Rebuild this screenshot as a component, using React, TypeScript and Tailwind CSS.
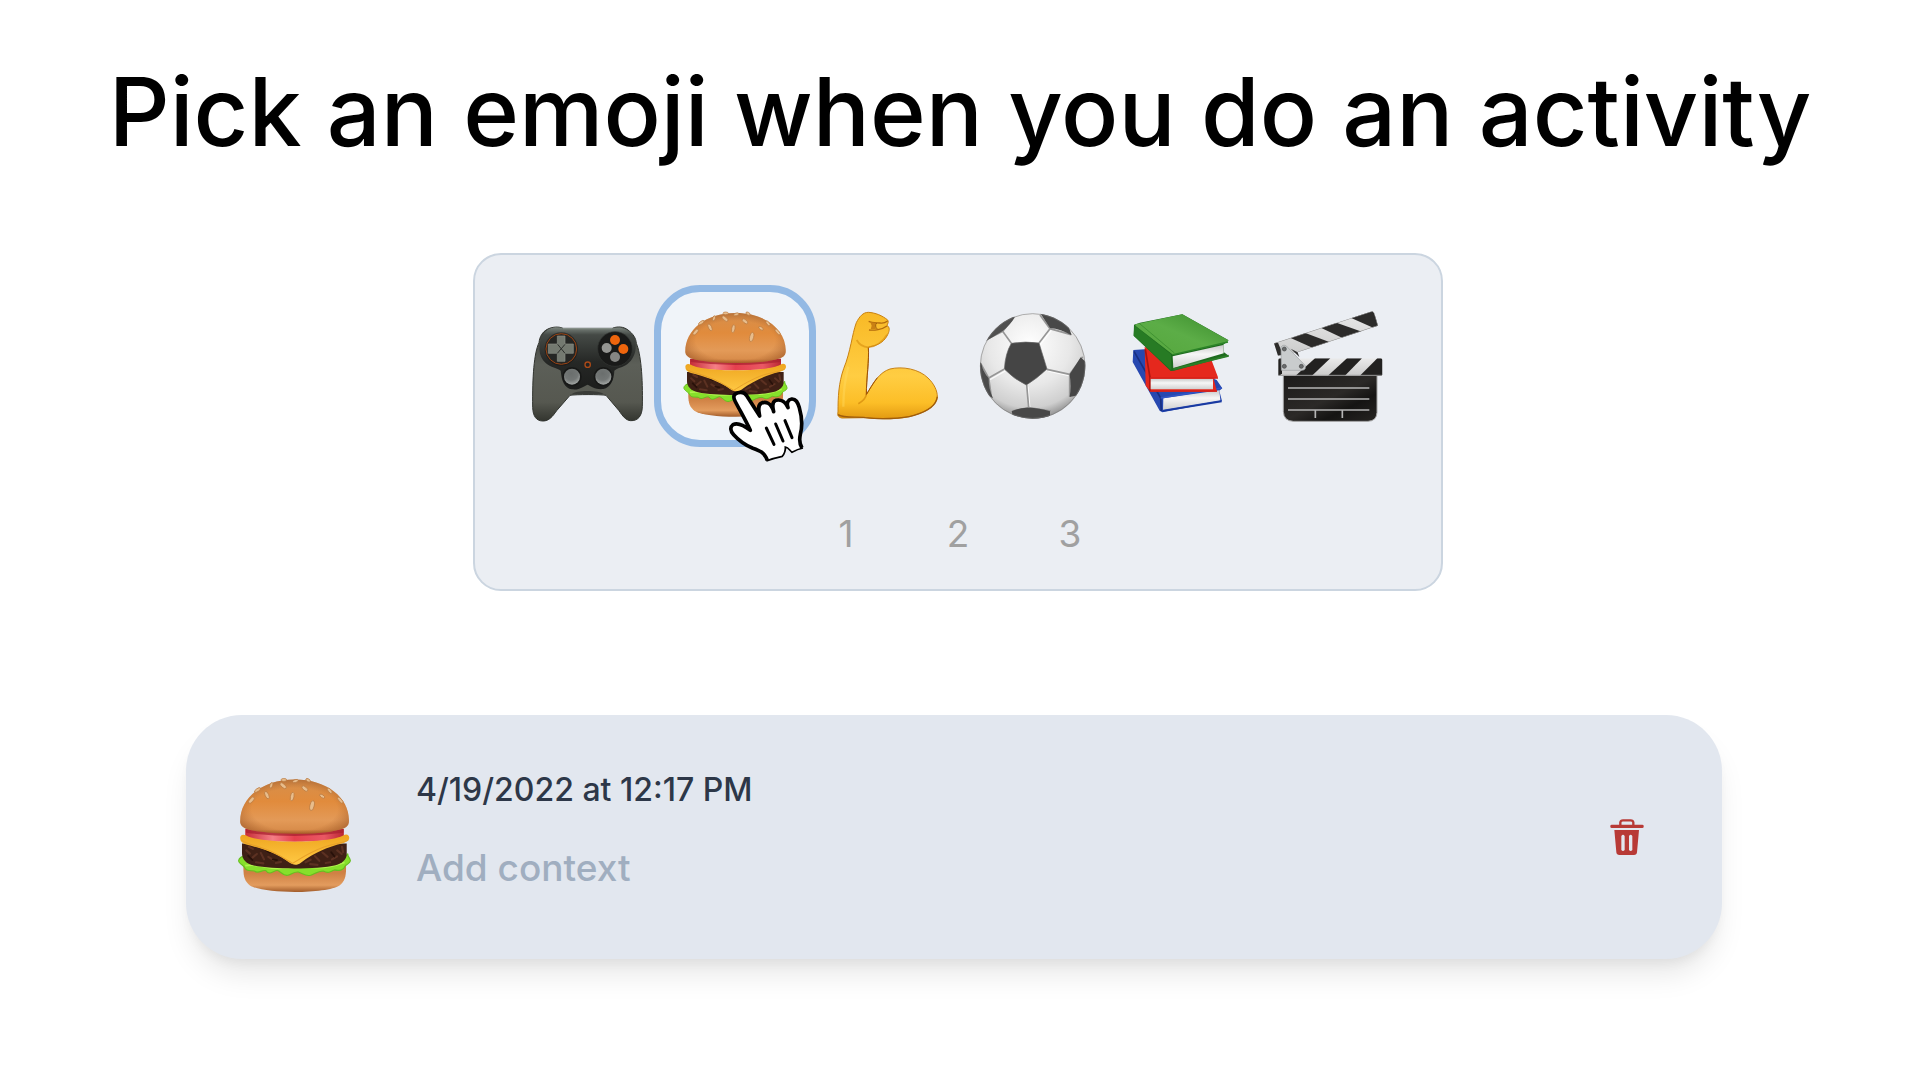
import React, { useId, useState } from "react";

type IconProps = { className?: string };

function Controller({ className }: IconProps) {
  return (
    <svg className={className} viewBox="46 48 360 360" aria-hidden="true">
      <defs>
        <linearGradient id="padGrip" x1="0" y1="0" x2="0" y2="1">
          <stop offset="0" stopColor="#3a3d39" />
          <stop offset="0.4" stopColor="#5c5f58" />
          <stop offset="0.8" stopColor="#565850" />
          <stop offset="1" stopColor="#33352f" />
        </linearGradient>
        <linearGradient id="padTop" x1="0" y1="0" x2="0" y2="1">
          <stop offset="0" stopColor="#7c857e" />
          <stop offset="0.12" stopColor="#454a46" />
          <stop offset="0.55" stopColor="#262826" />
          <stop offset="1" stopColor="#1c1d1c" />
        </linearGradient>
        <radialGradient id="padStick" cx="0.45" cy="0.3" r="0.7">
          <stop offset="0" stopColor="#6a6e6d" />
          <stop offset="0.6" stopColor="#737776" />
          <stop offset="1" stopColor="#a2a6a4" />
        </radialGradient>
      </defs>
      <path d="M110 118 C125 110 145 109 157 115 L305 115 C320 108 340 110 352 120 C368 132 376 145 377 160 C390 190 397 260 395 350 C394 378 382 393 360 392 C345 391 336 378 325 362 L286 316 C270 313 195 313 178 316 L138 362 C125 380 115 393 97 393 C76 393 67 378 66 352 C65 260 70 190 85 158 C87 140 95 126 110 118Z" fill="url(#padGrip)" stroke="#31342f" strokeWidth="3" />
      <path d="M100 130 C112 113 138 108 157 115 L305 115 C325 108 350 115 364 132 C384 160 378 205 345 226 C330 234 318 235 311 242 C310 270 300 292 278 297 C256 300 240 288 231 284 C220 288 207 301 184 298 C160 294 153 272 150 242 C140 234 120 233 105 219 C82 200 80 160 100 130Z" fill="url(#padTop)" />
      <path d="M183 313 C195 300 265 300 280 313Z" fill="#3a3c38" />
      <path d="M157 116 H305" stroke="#8d968f" strokeWidth="3" />
      <circle cx="152" cy="177" r="50" fill="#151615" opacity=".55" />
      <circle cx="152" cy="177" r="46" fill="#252624" stroke="#9a4313" strokeWidth="3" />
      <path d="M140 138 H163 V162 H188 V190 H163 V214 H140 V190 H113 V162 H140Z" fill="#747970" stroke="#8b9087" strokeWidth="2" strokeLinejoin="round" />
      <path d="M141 163 L163 190 M163 163 L140 190" stroke="#2d2f2c" strokeWidth="3" />
      <circle cx="313" cy="177" r="52" fill="#191a19" stroke="#333633" strokeWidth="2" />
      <circle cx="313" cy="150" r="15" fill="#ee650d" />
      <circle cx="338" cy="177" r="15" fill="#ee650d" />
      <circle cx="288" cy="174" r="15" fill="#949592" />
      <circle cx="313" cy="201" r="15" fill="#858683" />
      <circle cx="231" cy="224" r="8" fill="#222" stroke="#ac4a17" strokeWidth="4" />
      <circle cx="184" cy="260" r="29" fill="#171817" />
      <circle cx="278" cy="260" r="29" fill="#171817" />
      <circle cx="184" cy="260" r="24" fill="url(#padStick)" />
      <circle cx="278" cy="260" r="24" fill="url(#padStick)" />
    </svg>
  );
}

function Burger({ className }: IconProps) {
  const id = useId().replace(/[^a-zA-Z0-9]/g, "");
  return (
    <svg className={className} viewBox="105 108 360 360" aria-hidden="true">
      <defs>
        <linearGradient id={`${id}bun`} x1="0" y1="0" x2="0" y2="1">
          <stop offset="0" stopColor="#d68f4c" />
          <stop offset="0.4" stopColor="#e18b3c" />
          <stop offset="0.75" stopColor="#e39a58" />
          <stop offset="0.92" stopColor="#d98d4b" />
          <stop offset="1" stopColor="#a85c28" />
        </linearGradient>
        <radialGradient id={`${id}edge`} cx="0.5" cy="0.55" r="0.56">
          <stop offset="0.7" stopColor="#a9622c" stopOpacity="0" />
          <stop offset="1" stopColor="#a05a28" stopOpacity="0.6" />
        </radialGradient>
        <linearGradient id={`${id}base`} x1="0" y1="0" x2="0" y2="1">
          <stop offset="0.3" stopColor="#cf8144" />
          <stop offset="0.75" stopColor="#e39c5e" />
          <stop offset="1" stopColor="#a35d2b" />
        </linearGradient>
        <linearGradient id={`${id}tomato`} x1="0" y1="0" x2="1" y2="0">
          <stop offset="0" stopColor="#c62c38" />
          <stop offset="0.28" stopColor="#f57f86" />
          <stop offset="0.5" stopColor="#e5404e" />
          <stop offset="0.8" stopColor="#ea5864" />
          <stop offset="1" stopColor="#b92633" />
        </linearGradient>
        <linearGradient id={`${id}cheese`} x1="0" y1="0" x2="0" y2="1">
          <stop offset="0" stopColor="#eea51f" />
          <stop offset="1" stopColor="#ffc944" />
        </linearGradient>
      </defs>
      <path d="M145 365 C144 398 148 410 163 422 C200 446 375 446 411 422 C427 410 430 395 429 365Z" fill={`url(#${id}base)`} />
      <path d="M138 344 C130 350 130 356 136 361 C140 366 146 367 149 374 C154 384 165 380 175 382 C187 392 195 378 207 381 C218 396 226 382 239 380 C250 385 256 397 268 394 C280 391 286 383 297 385 C311 390 318 398 331 394 C345 388 353 382 366 382 C380 390 388 384 397 379 C410 382 422 380 426 369 C431 362 442 361 441 353 C440 345 433 342 434 334 L430 340 L146 340Z" fill="#86e02b" stroke="#66bf20" strokeWidth="3" />
      <path d="M150 367 Q178 364 206 371 T270 373 T340 372 T425 358" fill="none" stroke="#b0f34d" strokeWidth="5" />
      <path d="M141 306 H431 V335 C431 351 418 361 400 366 C350 378 228 378 174 367 C152 361 141 350 141 332Z" fill="#3f2015" />
      <path d="M153 325 l10 9 M170 345 l12 -10 M193 332 l9 18 M214 343 l14 9 M180 358 l20 3 M235 360 l14 -3 M160 315 l11 6 M317 358 l14 -7 M343 341 l12 13 M364 331 l14 12 M390 350 l14 -8 M405 325 l12 10 M373 360 l12 -2 M418 315 l3 15 M330 363 l20 2" stroke="#5c3122" strokeWidth="6" strokeLinecap="round" fill="none" />
      <path d="M158 340 l12 12 M208 325 l10 6 M226 350 l12 2 M346 324 l14 -5 M388 330 l9 12" stroke="#28110a" strokeWidth="5" strokeLinecap="round" fill="none" />
      <path d="M150 266 H423 V289 C390 305 184 306 150 289Z" fill={`url(#${id}tomato)`} />
      <path d="M152 276 Q287 294 422 276 L422 266 H152Z" fill="#a82230" opacity=".75" />
      <path d="M136 290 C137 281 144 280 153 284 C190 306 380 307 421 284 C431 278 438 283 438 290 C438 298 430 302 418 306 C380 315 342 331 304 359 C292 368 282 365 271 358 C238 333 193 319 153 309 C142 305 136 300 136 290Z" fill={`url(#${id}cheese)`} />
      <path d="M139 296 C150 308 177 310 201 320 C233 330 257 347 281 361 C303 347 338 326 370 315 C400 306 424 304 435 296" fill="none" stroke="#e7a029" strokeWidth="3" />
      <path d="M136 247 C134 183 194 129 287 129 C380 129 441 183 437 247 C435 267 407 268 382 274 C325 281 245 281 190 273 C165 269 138 266 136 247Z" fill={`url(#${id}bun)`} />
      <path d="M136 247 C134 183 194 129 287 129 C380 129 441 183 437 247 C435 267 407 268 382 274 C325 281 245 281 190 273 C165 269 138 266 136 247Z" fill={`url(#${id}edge)`} />
      <g fill="#e8bd8c" stroke="#b9793f" strokeWidth="2">
        <ellipse cx="167" cy="186" rx="5" ry="11" transform="rotate(42 167 186)" />
        <ellipse cx="210" cy="172" rx="5" ry="11" transform="rotate(-25 210 172)" />
        <ellipse cx="255" cy="146" rx="5" ry="11" transform="rotate(-48 255 146)" />
        <ellipse cx="280" cy="176" rx="5" ry="12" transform="rotate(10 280 176)" />
        <ellipse cx="315" cy="154" rx="5" ry="10" transform="rotate(-50 315 154)" />
        <ellipse cx="335" cy="201" rx="6" ry="14" transform="rotate(12 335 201)" />
        <ellipse cx="363" cy="175" rx="4" ry="8" transform="rotate(-55 363 175)" />
        <ellipse cx="222" cy="145" rx="4" ry="8" transform="rotate(20 222 145)" />
        <ellipse cx="257" cy="130" rx="8" ry="4" />
        <ellipse cx="289" cy="133" rx="8" ry="4" transform="rotate(-15 289 133)" />
        <ellipse cx="324" cy="131" rx="7" ry="4" transform="rotate(30 324 131)" />
        <ellipse cx="384" cy="160" rx="4" ry="9" transform="rotate(-40 384 160)" />
        <ellipse cx="413" cy="186" rx="4" ry="11" transform="rotate(-42 413 186)" />
        <ellipse cx="184" cy="158" rx="4" ry="10" transform="rotate(55 184 158)" />
      </g>
    </svg>
  );
}

function Biceps({ className }: IconProps) {
  return (
    <svg className={className} viewBox="40 48 360 360" aria-hidden="true">
      <defs>
        <linearGradient id="armSkin" x1="0" y1="0" x2="0" y2="1">
          <stop offset="0" stopColor="#f8b926" />
          <stop offset="0.6" stopColor="#ffcd42" />
          <stop offset="0.85" stopColor="#fcbe27" />
          <stop offset="1" stopColor="#e39a12" />
        </linearGradient>
      </defs>
      <path d="M137 98 C146 80 157 67 173 67 C194 68 215 77 231 90 C235 96 231 101 229 106 C238 113 236 120 234 127 C226 148 214 158 197 165 C187 170 181 168 173 172 C176 210 167 265 167 314 C190 275 207 247 238 237 C275 228 325 237 352 264 C370 281 380 302 380 320 C377 349 345 366 310 376 C273 389 206 388 164 383 L94 384 C82 382 80 375 82 366 C82 320 84 279 99 236 C120 185 124 133 137 98Z" fill="url(#armSkin)" stroke="#c98110" strokeWidth="3" />
      <path d="M173 172 C176 210 167 265 167 314 C177 298 187 280 200 263" fill="none" stroke="#9c5208" strokeWidth="3" />
      <path d="M82 374 C100 386 140 379 164 383 C206 388 273 387 310 376 C345 366 377 349 380 320" fill="none" stroke="#9f5c0b" strokeWidth="4" />
      <path d="M167 314 C165 325 158 333 143 341" fill="none" stroke="#d8900f" strokeWidth="5" opacity=".8" />
      <path d="M174 94 C184 99 196 98 208 99 C217 101 224 98 231 93" fill="none" stroke="#b26b0d" strokeWidth="4" />
      <path d="M175 120 C190 122 214 119 229 108" fill="none" stroke="#b26b0d" strokeWidth="4" />
      <path d="M179 97 L198 99 L193 106 L196 117 L180 118 L183 107Z" fill="#c98014" />
      <path d="M198 99 C193 104 194 113 200 117" fill="none" stroke="#9c5a0c" strokeWidth="3" />
      <path d="M138 150 C146 165 159 171 173 172 C196 170 216 155 229 134" fill="none" stroke="#d78e0e" strokeWidth="5" opacity=".6" />
      <path d="M113 230 C101 275 98 310 98 350" fill="none" stroke="#ffdc63" strokeWidth="7" opacity=".4" />
    </svg>
  );
}

function SoccerBall({ className }: IconProps) {
  return (
    <svg className={className} viewBox="37 48 360 360" aria-hidden="true">
      <defs>
        <radialGradient id="ballLight" cx="0.47" cy="0.3" r="0.7">
          <stop offset="0" stopColor="#fff" />
          <stop offset="0.55" stopColor="#e8e8e8" />
          <stop offset="0.85" stopColor="#cfcfcf" />
          <stop offset="1" stopColor="#929292" />
        </radialGradient>
        <clipPath id="ballClip">
          <circle cx="216" cy="228" r="158" />
        </clipPath>
      </defs>
      <circle cx="216" cy="228" r="158" fill="url(#ballLight)" />
      <g clipPath="url(#ballClip)">
        <g fill="none" stroke="#fff" strokeWidth="4" opacity=".8" transform="translate(4 5)">
          <path d="M126 124 L152 160 M235 159 L268 116 M130 238 L84 264 M198 285 L204 353 M259 238 L327 253" />
        </g>
        <g fill="none" stroke="#969696" strokeWidth="5">
          <path d="M126 124 L152 160 M235 159 L268 116 M130 238 L84 264 M198 285 L204 353 M259 238 L327 253" />
          <path d="M82 146 L126 124 L160 82 M238 75 L268 116 L331 134 M60 220 L84 264 L92 319 M366 200 L327 253 V320 M204 353 L155 363 M204 353 L270 363" />
        </g>
        <path d="M152 160 Q195 153 235 159 L259 237 Q227 267 197 285 Q159 267 131 237 Q134 190 152 160Z" fill="#454545" stroke="#666" strokeWidth="2" />
        <path d="M68 158 L126 123 Q150 103 163 80 L110 80Z" fill="#505050" />
        <path d="M235 64 L268 114 Q300 117 333 136 L310 70Z" fill="#484848" />
        <path d="M50 205 L62 221 Q67 244 84 265 Q84 297 97 325 L50 300Z" fill="#4a4a4a" />
        <path d="M360 202 Q345 226 327 253 Q332 290 327 321 L380 310 V220Z" fill="#464646" />
        <path d="M153 364 Q177 352 204 353 Q235 353 268 364 L268 395 H160Z" fill="#484848" />
      </g>
      <circle cx="216" cy="228" r="157" fill="none" stroke="#777" strokeWidth="3" opacity=".55" />
    </svg>
  );
}

function Books({ className }: IconProps) {
  return (
    <svg className={className} viewBox="34 48 360 360" aria-hidden="true">
      <defs>
        <linearGradient id="bookGreen" x1="0" y1="1" x2="1" y2="0">
          <stop offset="0" stopColor="#55a63c" />
          <stop offset="0.5" stopColor="#5cad47" />
          <stop offset="1" stopColor="#388a2b" />
        </linearGradient>
        <linearGradient id="bookPages" x1="0" y1="0" x2="0" y2="1">
          <stop offset="0" stopColor="#c9c9c9" />
          <stop offset="0.4" stopColor="#f6f6f6" />
          <stop offset="1" stopColor="#d0d0d0" />
        </linearGradient>
      </defs>
      <path d="M68 180 L102 178 L318 270 L335 295 L326 302 L334 333 L155 367 L147 362 L66 216Z" fill="#2748b0" />
      <path d="M70 184 L150 324 L152 363" fill="none" stroke="#182f82" strokeWidth="5" />
      <path d="M158 325 L326 301 L329 331 L157 359Z" fill="url(#bookPages)" />
      <path d="M156 363 L333 334" stroke="#1839a0" strokeWidth="5" />
      <path d="M150 324 L333 294" stroke="#3155c5" strokeWidth="5" />
      <path d="M102 171 L118 175 L302 209 L322 262 L309 267 L319 305 L119 305 L105 287Z" fill="#e5281d" />
      <path d="M104 178 L118 263 V304" fill="none" stroke="#a8140f" strokeWidth="5" />
      <path d="M120 266 H307 V298 H120Z" fill="url(#bookPages)" />
      <path d="M118 264 H322 M119 303 H319" stroke="#d5211a" strokeWidth="5" />
      <path d="M70 104 L88 98 L215 73 L354 151 L338 164 L339 186 L355 198 L190 242 L180 243 L69 137Z" fill="#1e6b1e" />
      <path d="M75 103 L215 73 L353 151 L348 158 L187 194 L74 107Z" fill="url(#bookGreen)" />
      <path d="M71 106 L181 193 L182 241 L69 137Z" fill="#277b24" />
      <path d="M87 101 L191 189" stroke="#2f8427" strokeWidth="3" opacity=".6" />
      <path d="M186 199 L338 165 L339 190 L188 234Z" fill="url(#bookPages)" />
      <path d="M187 194 L352 156" stroke="#2c8428" strokeWidth="4" />
      <path d="M188 238 L354 197" stroke="#2b7d27" strokeWidth="6" />
    </svg>
  );
}

function Clapper({ className }: IconProps) {
  return (
    <svg className={className} viewBox="61 48 360 360" aria-hidden="true">
      <defs>
        <linearGradient id="clapBody" x1="0" y1="0" x2="1" y2="1">
          <stop offset="0" stopColor="#1c1b1a" />
          <stop offset="0.5" stopColor="#2b2927" />
          <stop offset="0.7" stopColor="#151413" />
          <stop offset="1" stopColor="#262422" />
        </linearGradient>
        <linearGradient id="clapWhite" x1="0" y1="0" x2="0" y2="1">
          <stop offset="0" stopColor="#eaeaea" />
          <stop offset="1" stopColor="#c9c9c9" />
        </linearGradient>
        <clipPath id="clapUpper">
          <path d="M70 160 L360 65 Q368 62 371 69 L382 107 L141 187 L82 197Z" />
        </clipPath>
        <clipPath id="clapLower">
          <rect x="83" y="205" width="312" height="53" rx="5" />
        </clipPath>
      </defs>
      <path d="M98 255 H379 V367 Q378 393 352 394 H128 Q99 393 98 364Z" fill="url(#clapBody)" stroke="#a3a3a3" strokeWidth="3" />
      <path d="M112 294 H356 M112 327 H356 M112 360 H356 M194 361 V384 M275 361 V384" stroke="#b5b5b5" strokeWidth="5" />
      <g clipPath="url(#clapUpper)">
        <rect x="65" y="60" width="325" height="145" fill="url(#clapWhite)" />
        <g fill="#2c2b2a">
          <path d="M66 157 L82 158 L100 200 H70Z" />
          <path d="M120 144 L162 128 L242 158 L192 176Z" />
          <path d="M212 114 L251 96 L338 127 L282 147Z" />
          <path d="M300 83 L365 60 L390 110 L371 115Z" />
        </g>
        <path d="M70 160 L360 65 Q368 62 371 69 L382 107 L141 187" fill="none" stroke="#8f8f8f" strokeWidth="3" />
      </g>
      <g clipPath="url(#clapLower)">
        <rect x="83" y="205" width="312" height="53" fill="url(#clapWhite)" />
        <g fill="#222120">
          <path d="M193 205 H239 L183 258 H134Z" />
          <path d="M289 205 H334 L282 258 H231Z" />
          <path d="M380 205 H396 V258 H327Z" />
          <path d="M82 205 H94 V250 L86 258 H82Z" />
        </g>
      </g>
      <path d="M83 256 H394" stroke="#9a9a9a" strokeWidth="3" />
      <path d="M120 176 L141 187 L146 201Z" fill="#333" />
      <path d="M91 172 Q96 162 107 168 L163 226 Q168 240 155 241 H92Z" fill="#c9cccd" stroke="#9b9fa0" strokeWidth="2" />
      <g fill="#6a6c6d" stroke="#444" strokeWidth="2">
        <circle cx="101" cy="177" r="6" />
        <circle cx="101" cy="229" r="6" />
        <circle cx="152" cy="229" r="6" />
      </g>
    </svg>
  );
}

function HandPointer({ className }: IconProps) {
  return (
    <svg className={className} viewBox="265 360 234 219" aria-hidden="true">
      <path d="M383 571 C374 546 358 541 338 534 C315 524 298 512 282 494 C271 482 271 471 280 464 C296 456 314 467 332 481 C318 451 301 422 286 393 C279 379 283 371 295 368 C308 365 317 369 323 380 L360 438 C357 421 353 407 364 400 C378 393 394 398 402 425 C397 405 398 394 409 391 C424 387 438 396 445 413 C440 398 445 389 456 387 C469 386 474 397 479 413 C487 441 489 467 482 493 C478 511 480 523 487 534 C474 537 466 542 457 546 C450 541 446 533 437 532 C438 544 435 550 428 558 C413 560 397 565 383 571Z" fill="#fff" />
      <path d="M383 571 C374 546 358 541 338 534 C315 524 298 512 282 494 C271 482 271 471 280 464 C296 456 314 467 332 481 C318 451 301 422 286 393 C279 379 283 371 295 368 C308 365 317 369 323 380 L360 438 C357 421 353 407 364 400 C378 393 394 398 402 425 C397 405 398 394 409 391 C424 387 438 396 445 413 C440 398 445 389 456 387 C469 386 474 397 479 413 C487 441 489 467 482 493 C478 511 480 523 487 534" fill="none" stroke="#000" strokeWidth="11" strokeLinejoin="round" />
      <path d="M380 573 C398 566 413 562 428 559 C435 550 438 544 437 531 C446 532 450 541 457 547 C466 542 476 537 490 534" fill="none" stroke="#000" strokeWidth="5" />
      <path d="M380 474 L403 523 M408 462 L430 513 M436 452 L457 503" stroke="#000" strokeWidth="9" strokeLinecap="round" />
    </svg>
  );
}

function TrashIcon({ className }: IconProps) {
  return (
    <svg className={className} viewBox="148 117 102 108" aria-hidden="true">
      <path d="M179 137 V127 Q180 121 187 121 H210 Q217 121 218 127 V137" fill="none" stroke="#b83a36" strokeWidth="7" />
      <rect x="149" y="134" width="100" height="10" rx="4" fill="#b83a36" />
      <path fillRule="evenodd" d="M161 150 H235 L229 217 Q228 225 220 225 H176 Q168 225 167 217Z M182 168 V210 Q187 216 192 210 V168 Q187 161 182 168Z M205 168 V210 Q210 216 215 210 V168 Q210 161 205 168Z" fill="#b83a36" />
    </svg>
  );
}

const activities = [
  { name: "Gaming", Icon: Controller },
  { name: "Eating", Icon: Burger },
  { name: "Exercise", Icon: Biceps },
  { name: "Soccer", Icon: SoccerBall },
  { name: "Reading", Icon: Books },
  { name: "Movies", Icon: Clapper },
];

export default function App() {
  const [selected, setSelected] = useState(1);
  const [context, setContext] = useState("");

  return (
    <main className="min-h-screen bg-white pt-[52px] pb-16 font-['Inter',sans-serif]">
      <h1 className="text-center text-[95px] leading-[120px] font-medium whitespace-nowrap text-black">
        Pick an emoji when you do an activity
      </h1>

      <div className="mt-[81px] pr-1">
        <section
          aria-label="Activities"
          className="mx-auto w-full max-w-[970px] rounded-[28px] border-2 border-[#cbd5e0] bg-[#ebeef3] px-9 pt-[30px] pb-[31px]"
        >
          <div className="grid grid-cols-6 justify-items-center">
            {activities.map(({ name, Icon }, i) => (
              <div key={name} className="relative flex justify-center">
                <button
                  type="button"
                  aria-label={name}
                  aria-pressed={selected === i}
                  onClick={() => setSelected(i)}
                  className={
                    selected === i
                      ? "-mx-2 flex size-[162px] shrink-0 items-center justify-center rounded-[46px] border-[7px] border-[#93b9e4] bg-[#f0f4f9]"
                      : "-mx-2 flex size-[162px] shrink-0 items-center justify-center rounded-[46px]"
                  }
                >
                  <Icon className="size-[120px] shrink-0" />
                </button>
                {selected === i && (
                  <HandPointer className="pointer-events-none absolute top-[105px] left-[66px] h-[73px] w-[78px]" />
                )}
              </div>
            ))}
          </div>
          <nav aria-label="Pages" className="mt-[63px] flex justify-center gap-12 text-[37px] leading-[48px] text-[#a0a0a0]">
            <button type="button" className="w-16">1</button>
            <button type="button" className="w-16">2</button>
            <button type="button" className="w-16">3</button>
          </nav>
        </section>
      </div>

      <div className="mt-[124px] pr-3">
        <article className="mx-auto flex w-full max-w-[1536px] items-center rounded-[56px] bg-[#e2e7ef] py-[57px] pr-[78px] pl-[43px] shadow-[0_20px_30px_-6px_rgba(0,0,0,0.1),0_8px_12px_-4px_rgba(0,0,0,0.05)]">
          <Burger className="size-[130px] shrink-0" />
          <div className="ml-[57px] flex grow flex-col gap-9 pb-[10px]">
            <time className="text-[32px] leading-9 font-medium text-[#2d3748]">4/19/2022 at 12:17 PM</time>
            <input
              aria-label="Add context"
              placeholder="Add context"
              value={context}
              onChange={(e) => setContext(e.target.value)}
              className="h-12 w-full bg-transparent text-[37px] leading-[48px] font-medium text-[#2d3748] outline-none placeholder:text-[#a0aec0]"
            />
          </div>
          <button type="button" aria-label="Delete entry" className="shrink-0">
            <TrashIcon className="h-9 w-[34px]" />
          </button>
        </article>
      </div>
    </main>
  );
}
